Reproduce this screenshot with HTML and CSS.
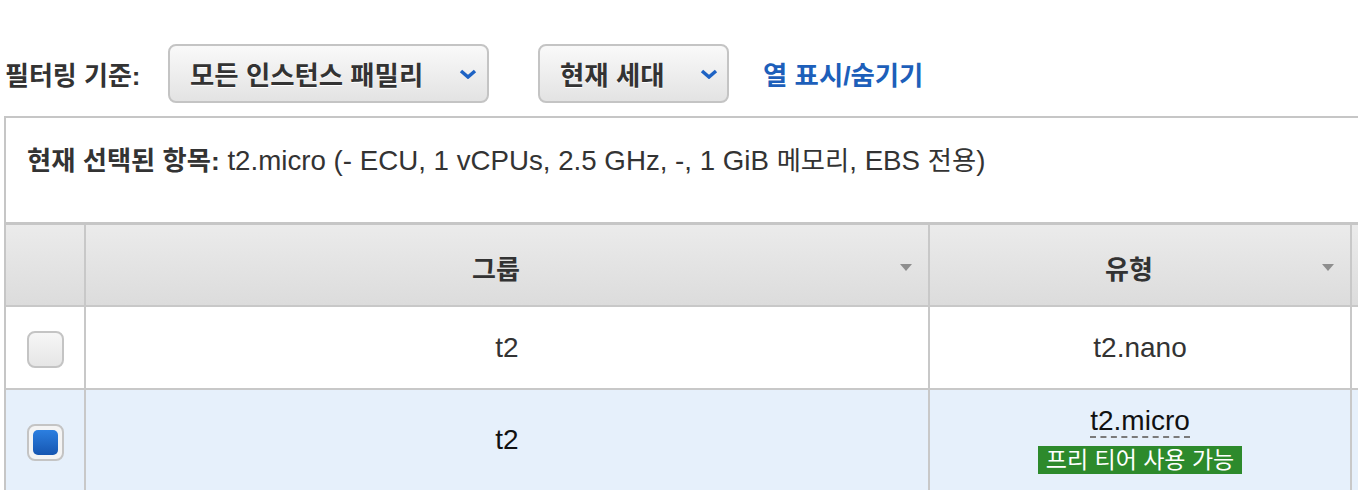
FILE: index.html
```html
<!DOCTYPE html>
<html lang="ko">
<head>
    <meta charset="UTF-8">
    <meta name="viewport" content="width=device-width, initial-scale=1.0">
    <title>인스턴스 유형 선택</title>
    <link rel="stylesheet" href="styles.css">
</head>
<body>
    <div class="page">
        <div class="toolbar">
            <span class="filter-label">필터링 기준:</span>
            <div class="select select-family">
                <span>모든 인스턴스 패밀리</span>
                <svg class="chevron" width="18" height="10" viewBox="0 0 18 10"><polyline points="2,2 9,8 16,2" /></svg>
            </div>
            <div class="select select-gen">
                <span>현재 세대</span>
                <svg class="chevron" width="18" height="10" viewBox="0 0 18 10"><polyline points="2,2 9,8 16,2" /></svg>
            </div>
            <a class="toggle-cols" href="#">열 표시/숨기기</a>
        </div>

        <div class="panel">
            <div class="selected-info">
                <strong class="ko">현재 선택된 항목:</strong> t2.micro (- ECU, 1 vCPUs, 2.5 GHz, -, 1 GiB <span class="ko">메모리</span>, EBS <span class="ko">전용</span>)
            </div>

            <table class="types">
                <thead>
                    <tr>
                        <th class="col-check"></th>
                        <th class="col-group"><div class="th-inner"><span class="th-label">그룹</span><span class="sort"></span></div></th>
                        <th class="col-type"><div class="th-inner"><span class="th-label">유형</span><span class="sort"></span></div></th>
                        <th class="col-rest"></th>
                    </tr>
                </thead>
                <tbody>
                    <tr class="row-nano">
                        <td><span class="checkbox"></span></td>
                        <td>t2</td>
                        <td>t2.nano</td>
                        <td></td>
                    </tr>
                    <tr class="row-micro selected">
                        <td><span class="checkbox checked"></span></td>
                        <td>t2</td>
                        <td>
                            <span class="type-name">t2.micro</span>
                            <div><span class="free-tier">프리 티어 사용 가능</span></div>
                        </td>
                        <td></td>
                    </tr>
                </tbody>
            </table>
        </div>
    </div>
</body>
</html>
```

FILE: styles.css
```css
html, body {
    margin: 0;
    overflow: hidden;
}
body {
    font-family: "Liberation Sans", "Noto Sans CJK KR", sans-serif;
    font-size: 28px;
    color: #333;
    background: #fff;
}
.page {
    padding-left: 4px;
}
.toolbar {
    display: flex;
    align-items: center;
    height: 59px;
    margin-top: 44px;
    padding-left: 1px;
}
.filter-label {
    width: 163px;
    font-weight: bold;
    font-size: 26px;
    color: #333;
}
.select {
    box-sizing: border-box;
    height: 59px;
    display: flex;
    align-items: center;
    justify-content: space-between;
    border: 2px solid #c4c4c4;
    border-radius: 8px;
    background: linear-gradient(#f9f9f9, #e3e3e3);
    font-weight: bold;
    font-size: 26.4px;
    color: #333;
    text-shadow: 0 1px 0 #fff;
}
.select-family {
    width: 321px;
    padding: 0 10px 0 20px;
}
.select-gen {
    width: 191px;
    margin-left: 49px;
    padding: 0 9px 0 20px;
}
.chevron polyline {
    fill: none;
    stroke: #1e63c4;
    stroke-width: 3.5;
}
.toggle-cols {
    margin-left: 34px;
    font-weight: bold;
    font-size: 26.4px;
    color: #1d5fba;
    text-decoration: none;
}
.panel {
    width: 1400px;
    margin-top: 13px;
    border-top: 2px solid #c6c6c6;
    border-left: 2px solid #c6c6c6;
}
.selected-info {
    height: 76px;
    padding: 28px 0 0 21px;
    line-height: 30px;
    font-size: 27.7px;
    border-bottom: 3px solid #c6c6c6;
}
.ko {
    font-size: 26.3px;
}
.types {
    width: 100%;
    table-layout: fixed;
    border-collapse: separate;
    border-spacing: 0;
}
.types th, .types td {
    box-sizing: border-box;
    padding: 0;
    border-right: 2px solid #c8c8c8;
    border-bottom: 2px solid #c8c8c8;
    text-align: center;
    vertical-align: middle;
}
.types th {
    height: 82px;
    background: linear-gradient(#ebebeb, #dcdcdc);
    font-size: 26px;
    font-weight: bold;
    color: #333;
}
.col-check { width: 80px; }
.col-group { width: 844px; }
.col-type { width: 422px; }
.th-inner {
    display: flex;
    align-items: center;
    padding: 4px 16px 0 6px;
}
.th-label {
    flex: 1;
    text-align: center;
}
.sort {
    width: 0;
    height: 0;
    border-left: 6px solid transparent;
    border-right: 6px solid transparent;
    border-top: 7px solid #8e8e8e;
}
.row-nano td {
    height: 83px;
    background: #fff;
}
.row-micro td {
    height: 102px;
    background: #e6f0fb;
    color: #111;
}
.checkbox {
    display: inline-block;
    box-sizing: border-box;
    width: 37px;
    height: 37px;
    border: 2px solid #c4c4c4;
    border-radius: 8px;
    background: linear-gradient(#f6f6f6, #e6e6e6);
    vertical-align: middle;
    position: relative;
    top: 2px;
}
.checkbox.checked {
    padding: 4px;
    background: #f4f4f4;
}
.checkbox.checked::after {
    content: "";
    display: block;
    width: 100%;
    height: 100%;
    border-radius: 5px;
    background: linear-gradient(#2c7fe0, #1656b1);
}
.type-name {
    display: inline-block;
    line-height: 30px;
    border-bottom: 2px dashed #7a7a7a;
}
.free-tier {
    display: inline-block;
    margin-top: 8px;
    padding: 0 8px;
    height: 28px;
    line-height: 28px;
    font-size: 23px;
    background: #2d8a2c;
    color: #fff;
}
```
